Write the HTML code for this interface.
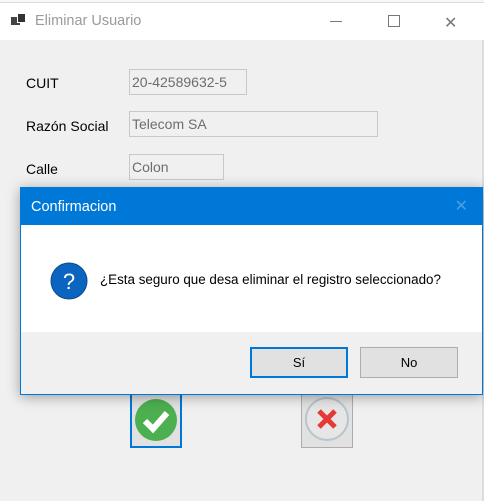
<!DOCTYPE html>
<html><head><meta charset="utf-8"><style>
*{margin:0;padding:0;box-sizing:border-box}
body{width:484px;height:501px;overflow:hidden;background:#f0f0f0;font-family:"Liberation Sans",sans-serif;position:relative}
.a{position:absolute}
.lbl{font-size:14px;color:#000}
.tb{background:#f0f0f0;border:1px solid #c8c8c8;color:#6d6d6d;font-size:14px;padding:4px 2px;height:26px}
</style></head><body>
<div class="a" style="left:0;top:0;width:484px;height:3px;background:#f7f7f7;border-bottom:1px solid #ddd"></div>
<div class="a" style="left:0;top:3px;width:484px;height:37px;background:#fff"></div>
<div class="a" style="left:11px;top:17px;width:9px;height:8px;background:#444"></div>
<div class="a" style="left:17px;top:13px;width:9px;height:10px;background:#333;border:1px solid #fff"></div>
<div class="a" style="left:35px;top:13px;font-size:14.5px;color:#9a9a9a">Eliminar Usuario</div>
<div class="a" style="left:330px;top:21px;width:12px;height:1px;background:#777"></div>
<div class="a" style="left:388px;top:15px;width:12px;height:12px;border:1px solid #777"></div>
<div class="a" style="left:444px;top:13px;font-size:16px;color:#777">✕</div>
<div class="a" style="left:482px;top:40px;width:2px;height:461px;background:#ddd"></div>

<div class="a lbl" style="left:26px;top:75px">CUIT</div>
<div class="a tb" style="left:129px;top:69px;width:118px">20-42589632-5</div>
<div class="a lbl" style="left:26px;top:118px">Razón Social</div>
<div class="a tb" style="left:129px;top:111px;width:249px">Telecom SA</div>
<div class="a lbl" style="left:26px;top:161px">Calle</div>
<div class="a tb" style="left:129px;top:154px;width:95px">Colon</div>

<div class="a" style="left:130px;top:393px;width:52px;height:55px;border:2px solid #0078d7;background:#e1e1e1"></div>
<svg class="a" style="left:134px;top:398px" width="44" height="44"><circle cx="22" cy="22" r="21" fill="#4caf50"/><path d="M11 23 L19 31 L33 15" stroke="#fff" stroke-width="6" fill="none"/></svg>
<div class="a" style="left:301px;top:393px;width:52px;height:55px;border:1px solid #adadad;background:#e1e1e1"></div>
<svg class="a" style="left:304px;top:396px" width="46" height="46"><circle cx="23" cy="23" r="21" fill="#e6e6e6" stroke="#b8c4cc" stroke-width="2"/><path d="M15 15 L31 31 M31 15 L15 31" stroke="#e53935" stroke-width="5"/></svg>

<div class="a" style="left:20px;top:187px;width:463px;height:208px;border:1px solid #0078d7;background:#f0f0f0;box-shadow:0 2px 12px rgba(0,0,0,.35)">
<div style="height:37px;background:#0078d7;color:#fff;font-size:14.5px;padding:11px 0 0 10px">Confirmacion<span style="position:absolute;right:14px;top:8px;color:#4a9fe3;font-size:16px">✕</span></div>
<div style="height:107px;background:#fff;position:relative">
<svg class="a" style="left:29px;top:37px" width="38" height="38"><circle cx="19" cy="19" r="18" fill="#0a64c0" stroke="#0b4d8f"/><text x="19" y="27" text-anchor="middle" fill="#fff" font-size="22" font-family="Liberation Sans">?</text></svg>
<div class="a" style="left:79px;top:47px;font-size:13.4px;color:#000">¿Esta seguro que desa eliminar el registro seleccionado?</div>
</div>
<div class="a" style="left:229px;top:159px;width:98px;height:31px;border:2px solid #0078d7;background:#e1e1e1;font-size:13px;text-align:center;line-height:27px">Sí</div>
<div class="a" style="left:339px;top:159px;width:98px;height:31px;border:1px solid #adadad;background:#e1e1e1;font-size:13px;text-align:center;line-height:29px">No</div>
</div>
</body></html>
